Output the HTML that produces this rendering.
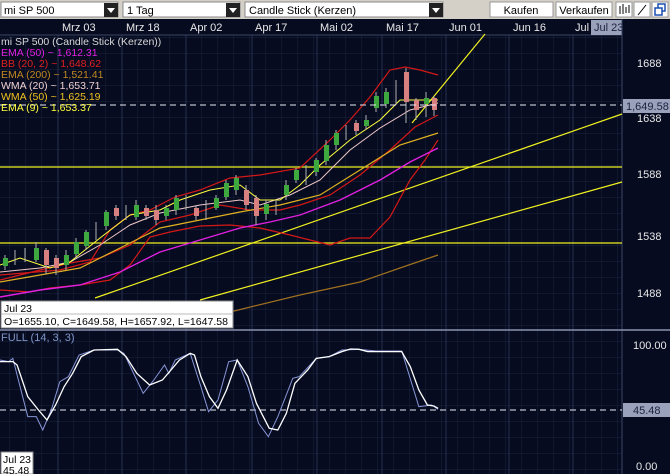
<!DOCTYPE html>
<html><head><meta charset="utf-8"><style>
body{margin:0;width:670px;height:474px;overflow:hidden;background:#060b1f;font-family:"Liberation Sans",sans-serif;}
svg{display:block}
text{font-family:"Liberation Sans",sans-serif;}
</style></head><body>
<svg width="670" height="474" xmlns="http://www.w3.org/2000/svg">
<defs>
<pattern id="g" width="16" height="16" patternUnits="userSpaceOnUse" x="10" y="6">
<path d="M16 0V16M0 16H16" stroke="#1a2442" stroke-width="1" fill="none"/>
</pattern>
</defs>
<rect width="670" height="474" fill="#060b1f"/>
<rect x="0" y="36" width="622" height="438" fill="url(#g)"/>
<g stroke="#26314f" stroke-width="1">
<line x1="58" y1="20" x2="58" y2="474"/><line x1="122" y1="20" x2="122" y2="474"/><line x1="186" y1="20" x2="186" y2="474"/><line x1="252" y1="20" x2="252" y2="474"/><line x1="317" y1="20" x2="317" y2="474"/><line x1="382" y1="20" x2="382" y2="474"/><line x1="446" y1="20" x2="446" y2="474"/><line x1="509" y1="20" x2="509" y2="474"/><line x1="573" y1="20" x2="573" y2="474"/>
</g>
<!-- toolbar -->
<rect x="0" y="0" width="670" height="19" fill="#d4d0c8"/>
<rect x="1" y="2" width="117" height="15" fill="#fff" stroke="#888"/><rect x="104" y="3" width="14" height="14" fill="#222"/><path d="M107 8h8l-4 5z" fill="#fff"/>
<text x="4" y="14" font-size="11" fill="#000">mi SP 500</text>
<rect x="123" y="2" width="117" height="15" fill="#fff" stroke="#888"/><rect x="226" y="3" width="14" height="14" fill="#222"/><path d="M229 8h8l-4 5z" fill="#fff"/>
<text x="127" y="14" font-size="11" fill="#000">1 Tag</text>
<rect x="245" y="2" width="198" height="15" fill="#fff" stroke="#888"/><rect x="429" y="3" width="14" height="14" fill="#222"/><path d="M432 8h8l-4 5z" fill="#fff"/>
<text x="249" y="14" font-size="11" fill="#000">Candle Stick (Kerzen)</text>
<rect x="490" y="2" width="63" height="15" fill="#fff" stroke="#999"/><text x="521" y="14" font-size="11" fill="#000" text-anchor="middle">Kaufen</text>
<rect x="556" y="2" width="56" height="15" fill="#fff" stroke="#999"/><text x="584" y="14" font-size="11" fill="#000" text-anchor="middle">Verkaufen</text>
<rect x="616" y="2" width="16" height="15" fill="#fff" stroke="#999"/><path d="M620 6v8M623 4v10M626 7v6M629 5v8" stroke="#000"/>
<rect x="634" y="2" width="16" height="15" fill="#fff" stroke="#999"/><path d="M638 15L646 5" stroke="#000"/>
<rect x="652" y="2" width="16" height="15" fill="#fff" stroke="#999"/><rect x="658" y="4" width="7" height="7" fill="none" stroke="#1a4fb0" stroke-width="1.5"/><rect x="655" y="8" width="7" height="7" fill="#fff" stroke="#1a4fb0" stroke-width="1.5"/>
<!-- date axis -->
<rect x="0" y="19" width="670" height="16" fill="#060b1f"/>
<line x1="0" y1="35" x2="622" y2="35" stroke="#3a4566"/>
<g font-size="11" fill="#e8e8e8">
<text x="62" y="31">Mrz 03</text><text x="126" y="31">Mrz 18</text><text x="190" y="31">Apr 02</text><text x="255" y="31">Apr 17</text><text x="320" y="31">Mai 02</text><text x="386" y="31">Mai 17</text><text x="449" y="31">Jun 01</text><text x="513" y="31">Jun 16</text><text x="575" y="31">Jul</text>
</g>
<rect x="591" y="20" width="31" height="15" fill="#9aa2bb"/><text x="594" y="31" font-size="11" fill="#1a2240">Jul 23</text>
<line x1="622" y1="19" x2="622" y2="474" stroke="#3a4566"/>
<!-- horizontal yellow lines -->
<g stroke="#f0f020" stroke-width="1.2" fill="none">
<line x1="0" y1="167" x2="622" y2="167"/><line x1="0" y1="243" x2="622" y2="243"/>
<line x1="95" y1="298" x2="622" y2="114"/>
<line x1="200" y1="300" x2="622" y2="182"/>
<line x1="412" y1="123" x2="485" y2="34"/>
</g>
<polyline fill="none" stroke="#a07020" stroke-width="1.2" points="230,312 300,295 360,282 400,268 438,255"/>
<polyline fill="none" stroke="#d41818" stroke-width="1.2" points="0,275 60,270 90,262 110,230 130,215 150,210 175,197 200,190 230,178 260,175 300,168 330,140 350,120 370,97 390,70 405,67 420,70 438,75"/>
<polyline fill="none" stroke="#d41818" stroke-width="1.2" points="0,290 30,292 50,288 80,285 110,280 130,265 150,237 170,232 200,226 230,225 260,228 290,235 310,240 330,245 350,238 370,238 390,217 410,180 425,160 438,140"/>
<polyline fill="none" stroke="#d41818" stroke-width="1.2" points="0,280 40,270 70,263 100,258 130,245 160,222 190,215 220,205 250,210 280,210 300,205 330,195 360,175 390,150 415,127 438,115"/>
<polyline fill="none" stroke="#e020e0" stroke-width="1.4" points="0,297 40,290 80,285 120,272 160,252 200,240 240,228 270,222 300,215 340,200 380,180 410,162 438,148"/>
<polyline fill="none" stroke="#e0b020" stroke-width="1.2" points="0,282 40,275 80,268 120,248 160,228 200,220 240,212 280,205 320,195 360,170 400,145 438,133"/>
<polyline fill="none" stroke="#f0c8c8" stroke-width="1" points="0,272 40,268 70,262 100,245 130,225 160,213 200,205 240,200 260,205 290,195 320,180 350,150 380,128 410,110 438,103"/>
<polyline fill="none" stroke="#ffff40" stroke-width="1" points="0,265 20,258 50,268 70,262 100,238 130,215 160,210 180,200 210,190 240,185 260,200 280,200 300,185 320,165 350,140 380,120 400,100 420,100 438,100"/>
<!-- candles -->
<g stroke="#b0b0b0" stroke-width="1">
<path d="M5 255v15M15 250v15M25 248v14M36 242v20M46 248v26M56 255v20M66 250v20M76 238v20M86 230v20M96 222v18M106 210v20M116 205v15M126 205v15M136 200v20M146 205v15M156 205v20M166 205v15M176 195v20M186 195v15M196 205v15M206 200v20M216 195v15M226 180v20M236 175v20M246 185v25M256 195v30M266 200v20M276 200v15M286 180v20M296 168v15M306 165v20M316 158v18M326 140v25M336 130v20M346 125v15M356 120v15M366 115v15M376 92v20M386 88v20M396 80v25M406 68v55M416 98v22M426 92v25M434 96v20"/>
</g>
<g fill="#3da83d">
<rect x="3" y="258" width="5" height="8"/><rect x="34" y="248" width="5" height="12"/><rect x="64" y="255" width="5" height="10"/><rect x="74" y="242" width="5" height="12"/><rect x="84" y="232" width="5" height="14"/><rect x="104" y="212" width="5" height="14"/><rect x="134" y="205" width="5" height="12"/><rect x="164" y="208" width="5" height="8"/><rect x="174" y="198" width="5" height="12"/><rect x="214" y="198" width="5" height="10"/><rect x="224" y="183" width="5" height="14"/><rect x="234" y="178" width="5" height="12"/><rect x="264" y="204" width="5" height="10"/><rect x="284" y="185" width="5" height="10"/><rect x="294" y="170" width="5" height="10"/><rect x="314" y="160" width="5" height="12"/><rect x="324" y="145" width="5" height="16"/><rect x="334" y="133" width="5" height="12"/><rect x="364" y="120" width="5" height="6"/><rect x="374" y="96" width="5" height="12"/><rect x="384" y="92" width="5" height="12"/><rect x="424" y="98" width="5" height="6"/>
</g>
<g fill="#d88080">
<rect x="44" y="250" width="5" height="15"/><rect x="54" y="258" width="5" height="10"/><rect x="114" y="208" width="5" height="8"/><rect x="144" y="208" width="5" height="8"/><rect x="154" y="210" width="5" height="10"/><rect x="194" y="208" width="5" height="8"/><rect x="244" y="190" width="5" height="15"/><rect x="254" y="198" width="5" height="18"/><rect x="354" y="123" width="5" height="8"/><rect x="404" y="72" width="5" height="30"/><rect x="414" y="100" width="5" height="10"/><rect x="432" y="98" width="5" height="12"/>
</g>
<!-- dashed price line -->
<line x1="0" y1="105" x2="622" y2="105" stroke="#e8e8f0" stroke-dasharray="6,4"/>
<!-- legend -->
<g font-size="10.5">
<text x="1" y="45" fill="#d8d8d8">mi SP 500 (Candle Stick (Kerzen))</text>
<text x="1" y="56" fill="#e020e0">EMA (50) ~ 1,612.31</text>
<text x="1" y="67" fill="#e02020">BB (20, 2) ~ 1,648.62</text>
<text x="1" y="78" fill="#c08820">EMA (200) ~ 1,521.41</text>
<text x="1" y="89" fill="#f0d0d0">WMA (20) ~ 1,653.71</text>
<text x="1" y="100" fill="#f0c020">WMA (50) ~ 1,625.19</text>
<text x="1" y="111" fill="#ffff40">EMA (9) ~ 1,653.37</text>
</g>
<!-- price axis -->
<g font-size="11" fill="#e8e8e8">
<text x="637" y="67">1688</text><text x="637" y="122">1638</text><text x="637" y="178">1588</text><text x="637" y="240">1538</text><text x="637" y="297">1488</text>
</g>
<rect x="623" y="99" width="47" height="14" fill="#9aa2bb"/><text x="626" y="110" font-size="11" fill="#1a2240">1,649.58</text>
<!-- tooltip -->
<rect x="1" y="301" width="232" height="27" fill="#fff" stroke="#888"/>
<line x1="1" y1="314" x2="233" y2="314" stroke="#bbb"/>
<text x="4" y="312" font-size="10.5" fill="#000">Jul 23</text>
<text x="4" y="325" font-size="10.5" fill="#000" textLength="224" lengthAdjust="spacingAndGlyphs">O=1655.10, C=1649.58, H=1657.92, L=1647.58</text>
<!-- separator -->
<line x1="0" y1="330" x2="670" y2="330" stroke="#8892b0" stroke-width="1.5"/>
<text x="1" y="341" font-size="11" fill="#7f95c8">FULL (14, 3, 3)</text>
<g font-size="11" fill="#e8e8e8"><text x="633" y="349">100.00</text><text x="636" y="470">0.00</text></g>
<line x1="0" y1="410" x2="622" y2="410" stroke="#e8e8f0" stroke-dasharray="6,4"/>
<rect x="623" y="403" width="47" height="14" fill="#9aa2bb"/><text x="633" y="414" font-size="11" fill="#1a2240">45.48</text>
<g transform="translate(0,290) scale(0.4274,0.3333)">
<polyline fill="none" stroke="#8896d8" stroke-width="1" vector-effect="non-scaling-stroke" points="0,210 20,215 30,205 45,280 65,380 85,380 100,420 120,360 140,275 160,260 185,195 220,180 275,180 290,190 320,270 335,310 360,270 385,225 395,250 410,210 445,190 470,290 488,365 510,330 535,215 555,210 580,290 605,400 628,440 650,380 685,265 700,260 740,205 770,200 800,180 840,178 880,183 940,183 980,350 1010,345 1025,358"/>
<polyline fill="none" stroke="#ffffff" stroke-width="1.3" vector-effect="non-scaling-stroke" points="0,215 30,215 40,225 65,320 90,360 110,390 130,345 150,290 170,250 190,200 220,180 275,178 295,200 320,250 350,285 380,270 420,210 445,190 455,195 470,260 490,320 510,355 530,300 555,210 580,260 600,340 630,415 650,420 670,370 690,280 720,240 740,205 770,200 800,185 820,177 840,178 860,185 900,185 940,185 960,230 980,300 1000,345 1015,348 1025,355"/>
</g>
<rect x="1" y="452" width="32" height="22" fill="#fff" stroke="#888"/>
<text x="3" y="463" font-size="10.5" fill="#000">Jul 23</text>
<text x="3" y="474" font-size="10.5" fill="#000">45.48</text>
</svg>
</body></html>
